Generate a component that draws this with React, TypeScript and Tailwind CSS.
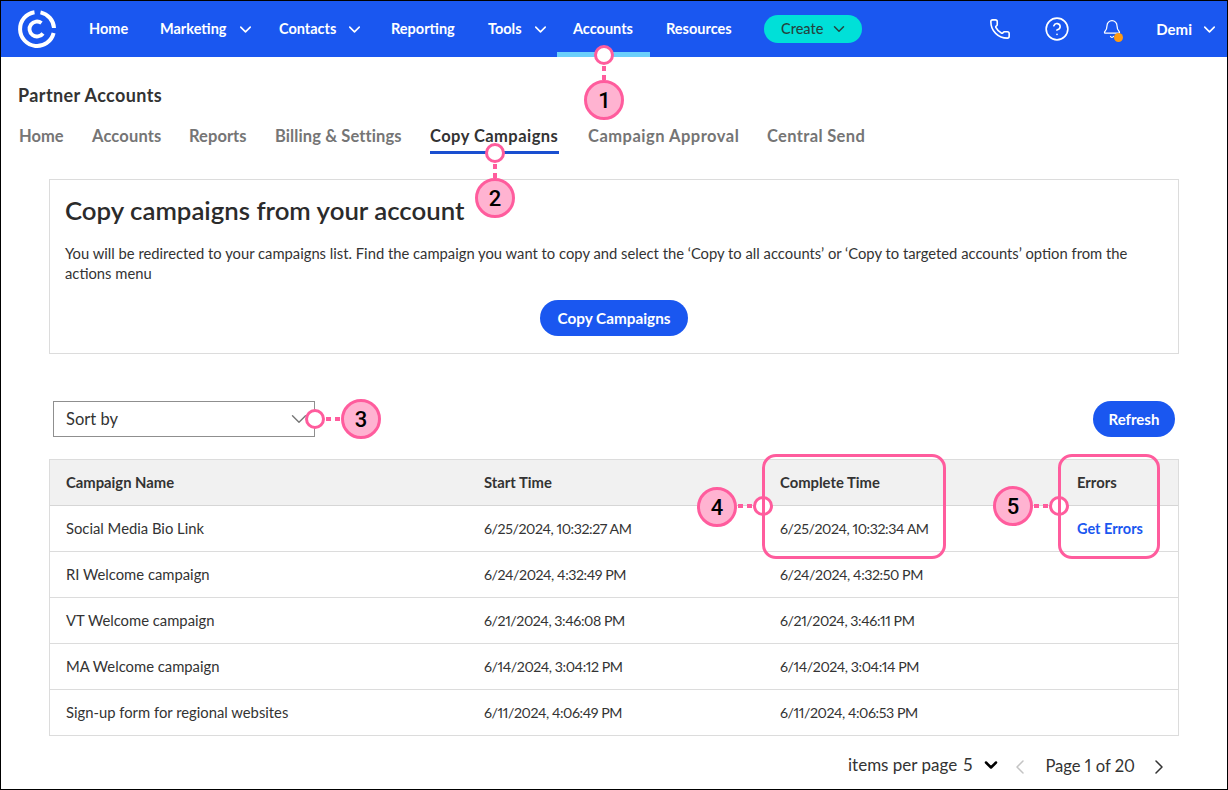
import React from "react";
import { ChevronDown, ChevronLeft, ChevronRight, Phone, CircleHelp, Bell } from "lucide-react";

const navItems = [
  { label: "Home", width: "w-[71px]" },
  { label: "Marketing", width: "w-[119px]", caret: true },
  { label: "Contacts", width: "w-[112px]", caret: true },
  { label: "Reporting", width: "w-[97px]" },
  { label: "Tools", width: "w-[69px]", caret: true },
  { label: "Accounts", width: "w-[93px]", active: true },
  { label: "Resources", width: "w-[113px] pl-[16px]" },
];

const subNav = [
  { label: "Home", width: "w-[73px]" },
  { label: "Accounts", width: "w-[97px] tracking-[0.15px]" },
  { label: "Reports", width: "w-[86px] tracking-[0.05px]" },
  { label: "Billing & Settings", width: "w-[155px] tracking-[0.1px]" },
  { label: "Copy Campaigns", width: "w-[158px]", active: true },
  { label: "Campaign Approval", width: "w-[179px] tracking-[0.5px]" },
  { label: "Central Send", width: "w-[110px] tracking-[0.35px]" },
];

const rows = [
  ["Social Media Bio Link", "6/25/2024, 10:32:27 AM", "6/25/2024, 10:32:34 AM", "Get Errors"],
  ["RI Welcome campaign", "6/24/2024, 4:32:49 PM", "6/24/2024, 4:32:50 PM", ""],
  ["VT Welcome campaign", "6/21/2024, 3:46:08 PM", "6/21/2024, 3:46:11 PM", ""],
  ["MA Welcome campaign", "6/14/2024, 3:04:12 PM", "6/14/2024, 3:04:14 PM", ""],
  ["Sign-up form for regional websites", "6/11/2024, 4:06:49 PM", "6/11/2024, 4:06:53 PM", ""],
];

const gridCols = "grid grid-cols-[418px_296px_297px_1fr]";

function Logo() {
  return (
    <svg width="40" height="40" viewBox="0 0 40 40" fill="none" stroke="white" strokeWidth="4">
      <path d="M17.5 3.2 A17 17 0 1 0 36.6 24" />
      <path d="M23.5 3.4 A17 17 0 0 1 37 19" />
      <path d="M24.5 14 A7.5 7.5 0 1 0 26 24.5" strokeWidth="3.8" />
    </svg>
  );
}

function Marker({ n, className }: { n: number; className: string }) {
  return (
    <div
      className={`absolute flex h-[40px] w-[40px] items-center justify-center rounded-full border-[3px] border-[#ff5c9d] bg-[#ffb3d1] font-['Roboto',sans-serif] text-[22px] font-medium text-black ${className}`}
    >
      {n}
    </div>
  );
}

function Dot({ className }: { className: string }) {
  return <div className={`absolute h-[20px] w-[20px] rounded-full border-[3px] border-[#ff5c9d] bg-white ${className}`} />;
}

function DashV({ className }: { className: string }) {
  return (
    <div className={`absolute flex flex-col gap-[4px] ${className}`}>
      <div className="h-[5px] w-[4px] bg-[#ff5c9d]" />
      <div className="h-[5px] w-[4px] bg-[#ff5c9d]" />
    </div>
  );
}

function DashH({ className }: { className: string }) {
  return (
    <div className={`absolute flex gap-[4px] ${className}`}>
      <div className="h-[4px] w-[5px] bg-[#ff5c9d]" />
      <div className="h-[4px] w-[5px] bg-[#ff5c9d]" />
    </div>
  );
}

export default function App() {
  return (
    <div className="relative h-[790px] w-[1228px] overflow-hidden border border-black bg-white font-['Lato','Noto_Sans',sans-serif] text-[#333333] proportional-nums">
      {/* top nav */}
      <div className="flex h-[56px] items-center bg-[#1a57f0] pl-[16px] text-white">
        <Logo />
        <nav className="ml-[32px] flex h-full items-center text-[14.5px] font-bold">
          {navItems.map((item) => (
            <div
              key={item.label}
              className={`flex h-full items-center ${item.width} ${item.active ? "relative" : ""}`}
            >
              <span className={item.active ? "pl-[16px]" : ""}>{item.label}</span>
              {item.caret && <ChevronDown className="ml-[9px] h-[19px] w-[19px]" strokeWidth={2} />}
              {item.active && <div className="absolute bottom-0 left-0 h-[5px] w-full bg-[#6bd0fb]" />}
            </div>
          ))}
        </nav>
        <button className="ml-[1px] flex h-[28px] w-[98px] items-center rounded-full bg-[#00e0d8] pl-[17px] text-[14.5px] font-medium text-[#24443f]">
          Create
          <ChevronDown className="ml-[7px] h-[18px] w-[18px]" strokeWidth={2} />
        </button>
        <div className="ml-auto flex items-center pr-[8px]">
          <Phone className="h-[22px] w-[22px]" strokeWidth={1.75} />
          <CircleHelp className="ml-[33px] h-[26px] w-[26px]" strokeWidth={1.5} />
          <div className="relative ml-[32px]">
            <Bell className="h-[20px] w-[20px]" strokeWidth={1.5} />
            <div className="absolute bottom-[-3px] right-[-1px] h-[9px] w-[9px] rounded-full bg-[#ff9a12]" />
          </div>
          <span className="ml-[34px] text-[15px] font-bold">Demi</span>
          <ChevronDown className="ml-[8px] h-[19px] w-[19px]" strokeWidth={2} />
        </div>
      </div>

      {/* page heading */}
      <h1 className="ml-[17px] mt-[27px] text-[18px] font-bold leading-[22px] tracking-[0.4px]">Partner Accounts</h1>
      <div className="ml-[18px] mt-[19px] flex text-[16.5px] font-bold text-[#757575]">
        {subNav.map((item) => (
          <div key={item.label} className={`${item.width} h-[28px] leading-[22px]`}>
            <span className={item.active ? "block w-[129px] whitespace-nowrap border-b-[3px] border-[#1a4fd0] pb-[4px] tracking-[0.45px] text-[#333333]" : ""}>
              {item.label}
            </span>
          </div>
        ))}
      </div>

      {/* copy card */}
      <section className="mx-[48px] mt-[26px] h-[175px] border border-[#dcdcdc] px-[15px] pt-[15px]">
        <h2 className="text-[25.8px] font-semibold leading-[30px] text-[#2b2b2b]">Copy campaigns from your account</h2>
        <p className="mt-[18px] text-[14.77px] leading-[20px]">
          You will be redirected to your campaigns list. Find the campaign you want to copy and select the ‘Copy to all
          accounts’ or ‘Copy to targeted accounts’ option from the actions menu
        </p>
        <div className="mt-[17px] flex justify-center">
          <button className="h-[36px] w-[148px] rounded-full bg-[#1a57f0] text-[15.3px] font-bold text-white">
            Copy Campaigns
          </button>
        </div>
      </section>

      {/* toolbar */}
      <div className="ml-[52px] mr-[52px] mt-[47px] flex items-center justify-between">
        <div className="flex h-[36px] w-[262px] items-center justify-between border border-[#8f8f8f] pl-[12px] pr-[2px] text-[16.5px]">
          <span className="mt-[1px]">Sort by</span>
          <ChevronDown className="h-[26px] w-[26px] text-[#777777]" strokeWidth={1.3} />
        </div>
        <button className="h-[36px] w-[82px] rounded-full bg-[#1a57f0] text-[15px] font-bold text-white">Refresh</button>
      </div>

      {/* table */}
      <div className="mx-[48px] mt-[22px] border border-[#dcdcdc] text-[14.8px]">
        <div className={`${gridCols} h-[46px] items-center border-b border-[#d6d6d6] bg-[#f1f1f1] font-bold`}>
          {["Campaign Name", "Start Time", "Complete Time", "Errors"].map((h) => (
            <div key={h} className="pl-[16px]">
              {h}
            </div>
          ))}
        </div>
        {rows.map((row, i) => (
          <div
            key={row[0]}
            className={`${gridCols} items-center ${i < rows.length - 1 ? "h-[46px] border-b border-[#dcdcdc]" : "h-[45px]"}`}
          >
            <div className="pl-[16px]">{row[0]}</div>
            <div className="pl-[16px] text-[14.2px] tracking-[-0.43px]">{row[1]}</div>
            <div className="pl-[16px] text-[14.2px] tracking-[-0.43px]">{row[2]}</div>
            <div className="pl-[16px] text-[14.5px] font-bold text-[#1a57f0]">{row[3]}</div>
          </div>
        ))}
      </div>

      {/* pagination */}
      <div className="mr-[56px] mt-[16px] flex items-center justify-end text-[16.6px]">
        <span className="mb-[4px] text-[17px]">items per page</span>
        <span className="mb-[4px] ml-[6px] text-[17px]">5</span>
        <ChevronDown className="mb-[4px] ml-[9px] h-[20px] w-[20px] text-black" strokeWidth={3} />
        <ChevronLeft className="ml-[7px] h-[24px] w-[24px] text-[#c4c4c4]" strokeWidth={1.5} />
        <span className="ml-[13px]">Page 1 of 20</span>
        <ChevronRight className="ml-[12px] h-[24px] w-[24px]" strokeWidth={1.5} />
      </div>

      {/* annotations */}
      <Marker n={1} className="left-[583px] top-[79px]" />
      <Dot className="left-[593px] top-[44px]" />
      <DashV className="left-[601px] top-[65px]" />
      <Marker n={2} className="left-[474px] top-[177px]" />
      <Dot className="left-[484px] top-[142px]" />
      <DashV className="left-[492px] top-[163px]" />
      <Marker n={3} className="left-[340px] top-[398px]" />
      <Dot className="left-[304px] top-[408px]" />
      <DashH className="left-[325px] top-[416px]" />
      <Marker n={4} className="left-[696px] top-[486px]" />
      <Dot className="left-[752px] top-[495px]" />
      <DashH className="left-[737px] top-[503px]" />
      <Marker n={5} className="left-[992px] top-[485px]" />
      <Dot className="left-[1048px] top-[495px]" />
      <DashH className="left-[1033px] top-[503px]" />
      <div className="absolute left-[761px] top-[453px] h-[105px] w-[184px] rounded-[14px] border-[3px] border-[#ff5c9d]" />
      <div className="absolute left-[1057px] top-[453px] h-[105px] w-[102px] rounded-[14px] border-[3px] border-[#ff5c9d]" />
    </div>
  );
}
